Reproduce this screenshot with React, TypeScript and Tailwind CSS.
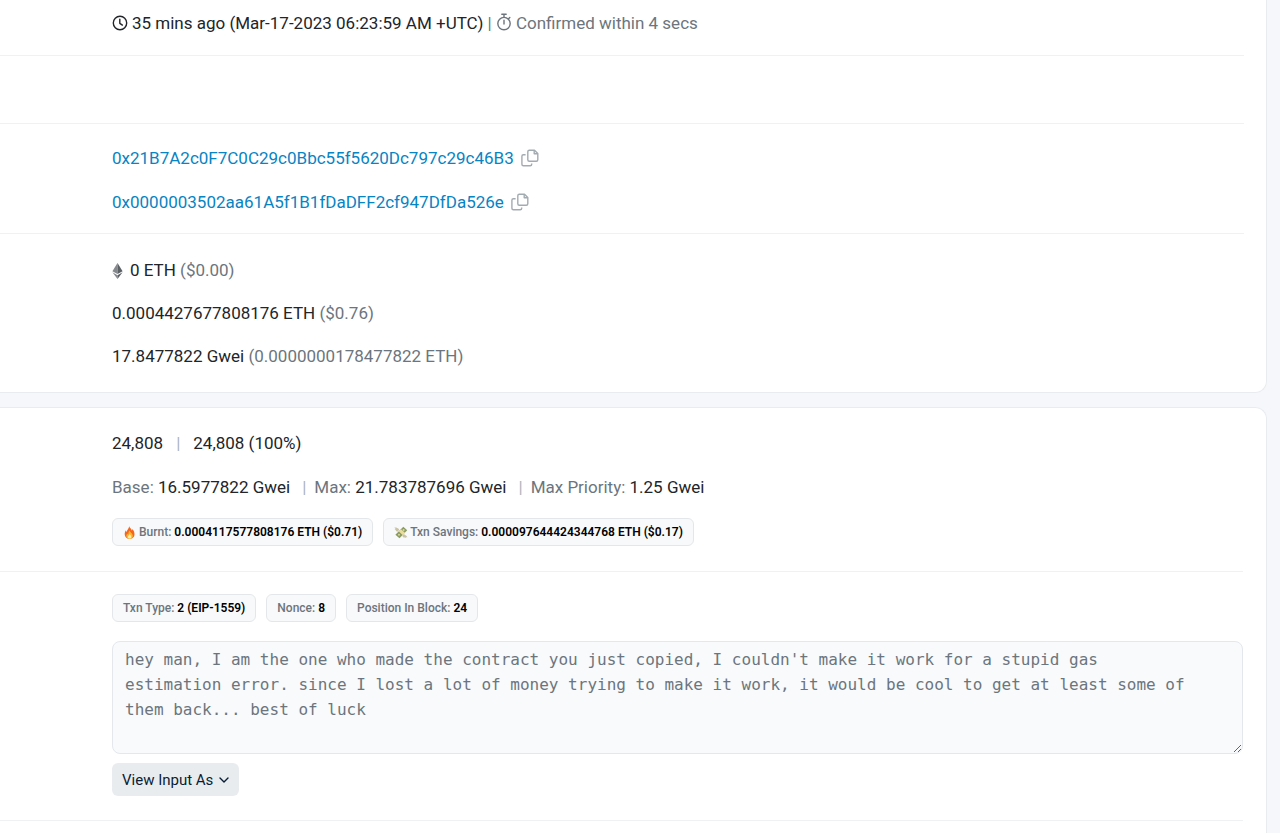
import React from 'react';

const ClockIcon: React.FC = () => (
  <svg className="inline-block w-4 h-4 align-[-2px] mr-1" viewBox="0 0 16 16" fill="none" stroke="currentColor" strokeWidth="1.4" strokeLinecap="round" strokeLinejoin="round" aria-hidden="true">
    <circle cx="8" cy="8" r="6.7" />
    <path d="M7.8 4.2v4.1l2.6 1.8" />
  </svg>
);

const StopwatchIcon: React.FC = () => (
  <svg className="inline-block w-4 h-[18px] align-[-2px] mr-1" viewBox="0 0 16 18" fill="none" stroke="currentColor" strokeWidth="1.4" strokeLinecap="round" aria-hidden="true">
    <circle cx="8" cy="10.6" r="6.2" />
    <path d="M5.8 1.2h4.4M8 1.4v2.8M8 7.2v3.9M12.6 5.8l1.2-1.2" />
  </svg>
);

const CopyIcon: React.FC = () => (
  <svg className="w-[18px] h-[18px]" viewBox="0 0 18 18" fill="none" stroke="currentColor" strokeWidth="1.4" strokeLinejoin="round" aria-hidden="true">
    <path d="M8.3 1.2h5.2l3.3 3.3v6.2a1.5 1.5 0 0 1-1.5 1.5h-7a1.5 1.5 0 0 1-1.5-1.5v-8a1.5 1.5 0 0 1 1.5-1.5z" />
    <path d="M13.2 1.4v3.4h3.4" />
    <path d="M4.6 5.7H2.4a1.5 1.5 0 0 0-1.5 1.5v8a1.5 1.5 0 0 0 1.5 1.5h6.8a1.5 1.5 0 0 0 1.5-1.5v-.8" />
  </svg>
);

const EthIcon: React.FC = () => (
  <svg className="inline-block w-[11px] h-4 align-[-3px] mr-[7px]" viewBox="0 0 11 16" aria-hidden="true">
    <path d="M5.5 0 .4 8.2l5.1 2.9z" fill="#85898d" />
    <path d="M5.5 0v11.1l5.1-2.9z" fill="#5b6064" />
    <path d="m.4 9.3 5.1 6.7v-3.8z" fill="#85898d" />
    <path d="M10.6 9.3 5.5 16v-3.8z" fill="#5b6064" />
  </svg>
);

const FireIcon: React.FC = () => (
  <svg className="w-[13px] h-[13px] mr-[3px]" viewBox="0 0 13 13" aria-hidden="true">
    <path d="M6.2.2c.6 1.7 2 2.500 2.700 4.200.3-.3.5-.8.5-1.400C10.900 4.500 11.500 6.500 11.500 8.300c0 2.800-2.100 4.600-5 4.600S1.700 11 1.700 8.300c0-1.800.5-3 1.300-4.100 0 .8.200 1.400.7 1.700C3.900 3.700 6 2.600 6.200.2z" fill="#f4661f" />
    <path d="M6.600 4.400c.2 1.600 3.200 3 3.200 5.500 0 1.700-1.300 2.800-3.200 2.800s-3.200-1-3.200-2.700c0-1.200.5-2 1.100-2.600.2.600.5.900.9 1 0-1.500.2-3 1.200-4z" fill="#fdb62f" />
    <path d="M6.800 8c.3 1 1.500 1.700 1.500 2.900 0 1-.7 1.700-1.700 1.700s-1.700-.7-1.700-1.700c0-1.100 1.400-1.800 1.900-2.900z" fill="#fff0a0" />
  </svg>
);

const MoneyIcon: React.FC = () => (
  <svg className="w-[14px] h-[13px] mr-[2px]" viewBox="0 0 14 13" aria-hidden="true">
    <path d="M5.200 3.400C3.800 1.900 2 1.300.4 1.600c.2.700.7 1.100 1.300 1.300-.4.200-.8.200-1 .2.300.8.900 1.100 1.500 1.200l-.7.300c.6.800 1.500 1 2.500.8z" fill="#c9c3a4" />
    <path d="M9.800 8.300c1 .3 2.600 1.200 3.600 2.900-.6.300-1.200.1-1.700-.2.100.4.100.7 0 1-.7-.1-1.200-.5-1.500-1l-.1.800C9 11.400 8.400 10.500 8.400 9.600z" fill="#c9c3a4" />
    <path d="m9.300.8 3.900 3.500-7.700 7.900-4.100-3.500z" fill="#8b9b62" />
    <path d="m7 3.200 3.900 3.500-2.200 2.200L4.800 5.400z" fill="#eadc9c" />
    <circle cx="9.600" cy="4.100" r="1" fill="#d9d6a2" />
    <circle cx="5" cy="8.700" r="1" fill="#d9d6a2" />
  </svg>
);

const Muted: React.FC<{ children: React.ReactNode }> = ({ children }) => (
  <span className="text-[#6c757d]">{children}</span>
);

const Address: React.FC<{ value: string }> = ({ value }) => (
  <div className="flex items-center gap-[7px]">
    <a href={`#${value}`} className="text-[#0784c3]">{value}</a>
    <button type="button" aria-label="Copy address" className="text-[#a3abb2]">
      <CopyIcon />
    </button>
  </div>
);

interface BadgeProps {
  label: string;
  value: string;
  icon?: React.ReactNode;
}

const Badge: React.FC<BadgeProps> = ({ label, value, icon }) => (
  <span className="inline-flex items-center h-7 px-[10px] rounded-md border border-[#e4e7ea] bg-[#f8f9fa] text-[12px] font-medium text-[#6c757d] whitespace-pre">
    {icon}
    {label}: <span className="font-semibold text-black">{value}</span>
  </span>
);

const message = `hey man, I am the one who made the contract you just copied, I couldn't make it work for a stupid gas
estimation error. since I lost a lot of money trying to make it work, it would be cool to get at least some of
them back... best of luck`;

const App: React.FC = () => {
  return (
    <main className="min-h-screen flex flex-col gap-[14px] bg-[#f5f7fa] pr-[13px] font-['Roboto',sans-serif] text-[17px] leading-[26px] text-[#212529]">
      <section className="bg-white border-r border-b border-[#e9ecef] rounded-br-xl pr-[22px]">
        <div className="pl-28 pt-[10px] pb-[19px] border-b border-[#eff1f3]">
          <ClockIcon />
          35 mins ago (Mar-17-2023 06:23:59 AM +UTC){' '}
          <Muted>
            | <StopwatchIcon />
            Confirmed within 4 secs
          </Muted>
        </div>
        <div className="h-[68px] border-b border-[#eff1f3]" />
        <div className="flex flex-col gap-[18px] pl-28 pt-[21px] pb-[18px] border-b border-[#eff1f3]">
          <Address value="0x21B7A2c0F7C0C29c0Bbc55f5620Dc797c29c46B3" />
          <Address value="0x0000003502aa61A5f1B1fDaDFF2cf947DfDa526e" />
        </div>
        <div className="flex flex-col gap-[17px] pl-28 pt-[23px] pb-[23px]">
          <div>
            <EthIcon />
            0 ETH <Muted>($0.00)</Muted>
          </div>
          <div>
            0.0004427677808176 ETH <Muted>($0.76)</Muted>
          </div>
          <div>
            17.8477822 Gwei <Muted>(0.0000000178477822 ETH)</Muted>
          </div>
        </div>
      </section>

      <section className="flex-1 bg-white border-r border-t border-[#e9ecef] rounded-tr-xl pr-[23px]">
        <div className="flex flex-col gap-[18px] pl-28 pt-[22px] pb-[25px] border-b border-[#eff1f3]">
          <div>
            24,808
            <span className="mx-[13px] text-[#adb5bd]">|</span>
            24,808 (100%)
          </div>
          <div>
            <Muted>Base:</Muted> 16.5977822 Gwei
            <span className="ml-3 mr-2 text-[#adb5bd]">|</span>
            <Muted>Max:</Muted> 21.783787696 Gwei
            <span className="ml-3 mr-2 text-[#adb5bd]">|</span>
            <Muted>Max Priority:</Muted> 1.25 Gwei
          </div>
          <div className="flex flex-wrap gap-[10px]">
            <Badge icon={<FireIcon />} label="Burnt" value="0.0004117577808176 ETH ($0.71)" />
            <Badge icon={<MoneyIcon />} label="Txn Savings" value="0.000097644424344768 ETH ($0.17)" />
          </div>
        </div>
        <div className="pl-28 pt-[22px] pb-6 border-b border-[#eff1f3]">
          <div className="flex flex-wrap gap-[10px]">
            <Badge label="Txn Type" value="2 (EIP-1559)" />
            <Badge label="Nonce" value="8" />
            <Badge label="Position In Block" value="24" />
          </div>
          <textarea
            readOnly
            aria-label="Input data"
            defaultValue={message}
            className="block w-full h-[113px] mt-[19px] px-3 pt-[5px] rounded-lg border border-[#e4e8ec] bg-[#f8fafc] font-['DejaVu_Sans_Mono',monospace] text-[16px] leading-[25px] text-[#6c757d] whitespace-pre overflow-hidden resize"
          />
          <button type="button" className="flex items-center gap-[6px] h-[33px] mt-[9px] px-[10px] rounded-md bg-[#e9ecef] text-[15px] text-[#081d35]">
            View Input As
            <svg className="w-[10px] h-[10px]" viewBox="0 0 10 10" fill="none" stroke="currentColor" strokeWidth="1.4" strokeLinecap="round" strokeLinejoin="round" aria-hidden="true">
              <path d="m1 3 4 4 4-4" />
            </svg>
          </button>
        </div>
      </section>
    </main>
  );
};

export default App;
